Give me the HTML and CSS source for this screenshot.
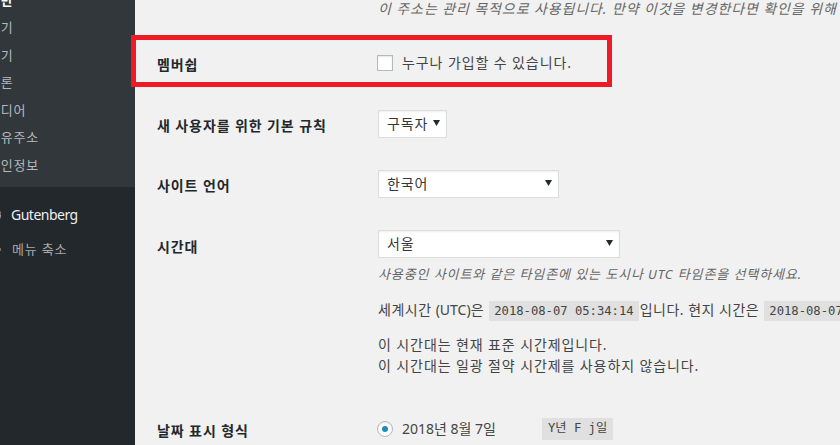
FILE: index.html
```html
<!DOCTYPE html>
<html lang="ko">
<head>
<meta charset="utf-8">
<title>일반 설정</title>
<link rel="stylesheet" href="styles.css">
</head>
<body>
<div class="page">
  <nav class="sidebar">
    <div class="menu">
      <ul class="submenu">
        <li class="current">일반</li>
        <li>쓰기</li>
        <li>읽기</li>
        <li>토론</li>
        <li>미디어</li>
        <li>고유주소</li>
        <li>개인정보</li>
      </ul>
      <div class="separator"></div>
      <div class="menu-item gutenberg">
        <span class="menu-icon">
          <svg width="20" height="20" viewBox="0 0 20 20"><circle cx="9" cy="10" r="8" fill="none" stroke="#a0a5aa" stroke-width="2"/><rect x="16" y="8" width="2" height="2" fill="#9a5a4a"/></svg>
        </span>
        <span class="menu-name">Gutenberg</span>
      </div>
      <div class="menu-item collapse">
        <span class="menu-icon">
          <svg width="20" height="20" viewBox="0 0 20 20"><circle cx="9" cy="10" r="8" fill="#a0a5aa"/><path d="M11 6l-4 4 4 4z" fill="#23282d"/><rect x="16" y="9" width="2" height="3" fill="#8a6a4a"/></svg>
        </span>
        <span class="menu-name">메뉴 축소</span>
      </div>
    </div>
  </nav>

  <main class="content">
    <p class="description top-desc">이 주소는 관리 목적으로 사용됩니다. 만약 이것을 변경한다면 확인을 위해 새 주소로 이메일을 보낼 것입니다.</p>

    <div class="row row-membership">
      <div class="label">멤버쉽</div>
      <div class="field">
        <label class="check"><span class="checkbox"></span>누구나 가입할 수 있습니다.</label>
      </div>
      <div class="highlight"></div>
    </div>

    <div class="row row-role">
      <div class="label">새 사용자를 위한 기본 규칙</div>
      <div class="field">
        <div class="select select-role"><span>구독자</span><svg class="arrow" width="7" height="6" viewBox="0 0 7 6"><path d="M0 0h7L3.5 6z" fill="#23282d"/></svg></div>
      </div>
    </div>

    <div class="row row-lang">
      <div class="label">사이트 언어</div>
      <div class="field">
        <div class="select select-lang"><span>한국어</span><svg class="arrow" width="7" height="6" viewBox="0 0 7 6"><path d="M0 0h7L3.5 6z" fill="#23282d"/></svg></div>
      </div>
    </div>

    <div class="row row-tz">
      <div class="label">시간대</div>
      <div class="field">
        <div class="select select-tz"><span>서울</span><svg class="arrow" width="7" height="6" viewBox="0 0 7 6"><path d="M0 0h7L3.5 6z" fill="#23282d"/></svg></div>
        <p class="description tz-desc">사용중인 사이트와 같은 타임존에 있는 도시나 UTC 타임존을 선택하세요.</p>
        <p class="utc-line">세계시간 <span class="latin">(UTC)</span>은 <code>2018-08-07 05:34:14</code>입니다. 현지 시간은 <code>2018-08-07 14:34:14</code>입니다.</p>
        <p class="tz-info">이 시간대는 현재 표준 시간제입니다.<br>이 시간대는 일광 절약 시간제를 사용하지 않습니다.</p>
      </div>
    </div>

    <div class="row row-date">
      <div class="label">날짜 표시 형식</div>
      <div class="field">
        <label class="radio-label"><span class="radio"><span class="dot"></span></span><span class="date-text">2018년 8월 7일</span></label><code class="fmt">Y년 F j일</code>
      </div>
    </div>
  </main>
</div>
</body>
</html>
```

FILE: styles.css
```css
* {
  box-sizing: border-box;
}

html, body {
  margin: 0;
  padding: 0;
  width: 840px;
  height: 445px;
  overflow: hidden;
  background: #f1f1f1;
}

body {
  font-family: "Noto Sans", "Noto Sans CJK KR", sans-serif;
  font-size: 14px;
  color: #444;
}

.page {
  display: flex;
  width: 840px;
  height: 445px;
}

/* Sidebar */
.sidebar {
  width: 135px;
  flex: 0 0 135px;
  height: 445px;
  background: #23282d;
  overflow: hidden;
}

.menu {
  width: 160px;
  margin-left: -25px;
}

.submenu {
  list-style: none;
  margin: -21px 0 0;
  padding: 7px 0 8px;
  background: #32373c;
}

.submenu li {
  font-size: 13px;
  line-height: 18.5px;
  padding: 4.5px 0 4.5px 13px;
  color: #b4b9be;
  white-space: nowrap;
  letter-spacing: 0.8px;
}

.submenu li.current {
  color: #fff;
  font-weight: 600;
}

.separator {
  height: 5px;
  margin-bottom: 6px;
}

.menu-item {
  display: flex;
  align-items: center;
  height: 34px;
  white-space: nowrap;
}

.menu-icon {
  width: 36px;
  flex: 0 0 36px;
  display: flex;
  justify-content: center;
  align-items: center;
}

.gutenberg .menu-name {
  font-size: 14px;
  color: #eee;
  letter-spacing: -0.5px;
}

.collapse .menu-name {
  font-size: 13px;
  color: #aaa;
  padding-left: 1px;
  letter-spacing: 0.8px;
}

/* Content */
.content {
  flex: 1;
  padding-left: 22px;
  min-width: 0;
  letter-spacing: 0.9px;
}

p {
  margin: 0;
}

.description {
  font-style: italic;
  color: #666;
}

.top-desc {
  font-size: 14px;
  line-height: 17px;
  padding-left: 221px;
  white-space: nowrap;
}

.row {
  display: flex;
  align-items: center;
  position: relative;
}

.label {
  width: 221px;
  flex: 0 0 221px;
  font-weight: 600;
  color: #23282d;
  font-size: 14px;
  line-height: 20px;
  padding-top: 4px;
}

.field {
  flex: 1;
  min-width: 0;
}

.row-membership {
  margin-top: 16px;
  height: 60px;
}

.row-role {
  height: 62px;
}

.row-lang {
  height: 58px;
}

.row-tz {
  align-items: flex-start;
  padding-top: 17px;
}

.row-tz .label {
  line-height: 28px;
  padding-top: 3px;
}

.check {
  display: flex;
  align-items: center;
  color: #444;
  line-height: 20px;
}

.checkbox {
  width: 16px;
  height: 16px;
  border: 1px solid #b4b9be;
  background: #fff;
  box-shadow: inset 0 1px 2px rgba(0, 0, 0, 0.1);
  margin-left: -1px;
  margin-right: 9px;
}

.highlight {
  position: absolute;
  left: -26px;
  top: 2px;
  width: 481px;
  height: 52px;
  border: 5px solid #ed1c24;
  pointer-events: none;
}

.select {
  height: 28px;
  background: #fff;
  border: 1px solid #ddd;
  box-shadow: inset 0 1px 2px rgba(0, 0, 0, 0.07);
  display: flex;
  align-items: center;
  justify-content: space-between;
  padding: 0 6px 2px 8px;
  color: #32373c;
  font-size: 14px;
}

.select .arrow {
  margin-top: -1px;
}

.select-role {
  width: 69px;
}

.select-lang {
  width: 181px;
}

.select-tz {
  width: 242px;
}

.tz-desc {
  font-size: 13px;
  line-height: 18px;
  margin-top: 7px;
  white-space: nowrap;
}

.utc-line {
  margin-top: 17px;
  line-height: 20px;
  white-space: nowrap;
  letter-spacing: 0.5px;
}

.latin {
  letter-spacing: 0;
}

code {
  font-family: "DejaVu Sans Mono", "Noto Sans CJK KR", monospace;
  font-size: 12.2px;
  line-height: 15px;
  letter-spacing: 0;
  display: inline-block;
  padding: 3px 5px 2px;
  margin: 0 1px;
  background: rgba(0, 0, 0, 0.07);
  color: #444;
  vertical-align: middle;
}

.tz-info {
  margin-top: 13px;
  line-height: 21px;
  white-space: nowrap;
}

.row-date {
  margin-top: 38px;
  height: 30px;
}

.radio-label {
  display: inline-flex;
  align-items: center;
  vertical-align: middle;
}

.radio {
  width: 16px;
  height: 16px;
  border-radius: 50%;
  border: 1px solid #b4b9be;
  background: #fff;
  box-shadow: inset 0 1px 2px rgba(0, 0, 0, 0.1);
  display: flex;
  align-items: center;
  justify-content: center;
  margin-left: -1px;
  margin-right: 9px;
}

.dot {
  width: 6px;
  height: 6px;
  border-radius: 50%;
  background: #1e8cbe;
}

.date-text {
  display: inline-block;
  min-width: 140px;
  line-height: 20px;
  letter-spacing: 0;
}

.fmt {
  margin: 0;
  padding: 3px 6px 4px;
}
```
